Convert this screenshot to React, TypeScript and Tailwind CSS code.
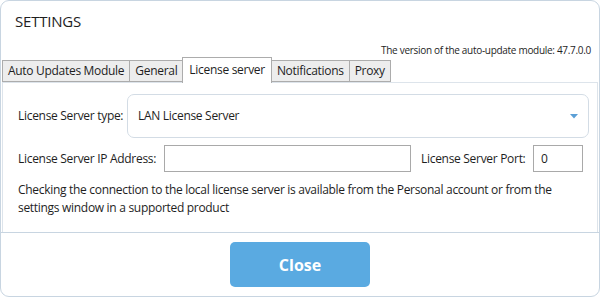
import React from 'react'

const tabs = ['Auto Updates Module', 'General', 'License server', 'Notifications', 'Proxy']

export default function App() {
  const active = 'License server'

  return (
    <div className="w-[600px] h-[297px] bg-white text-[#1e1e1e]" style={{ fontFamily: '"Open Sans", "Noto Sans", sans-serif' }}>
      <div className="h-full border border-[#c8d5e1] rounded-[9px] flex flex-col overflow-hidden">
        {/* header */}
        <div className="pl-[14px] pt-[10px] text-[15px] leading-[20px] tracking-[-0.2px]">SETTINGS</div>
        <div className="text-right pr-[8px] mt-[12px] text-[10px] leading-[14px] tracking-[-0.3px]">
          The version of the auto-update module: 47.7.0.0
        </div>

        {/* tabs */}
        <div className="flex items-end pl-[1px] h-[25px] relative z-10">
          {tabs.map(t =>
            t === active ? (
              <div key={t} className="h-[26px] px-[6px] pt-[3px] bg-white border border-b-0 border-[#acacac] text-[12px] leading-[18px] -mb-[1px] -ml-[1px] tracking-[-0.3px]">
                {t}
              </div>
            ) : (
              <div key={t} className="h-[22px] px-[5px] bg-[#ededed] border border-[#acacac] -ml-[1px] first:ml-0 text-[12px] leading-[20px] tracking-[-0.3px]">
                {t}
              </div>
            )
          )}
        </div>

        {/* panel */}
        <div className="flex-1 mx-[1px] border-l border-r border-t border-[#dde4eb] pl-[15px] pr-[8px] pt-[11px] text-[12px] tracking-[-0.3px]">
          <div className="flex items-center">
            <div className="w-[109px]">License Server type:</div>
            <div className="flex-1 h-[44px] border border-[#d3dce5] rounded-[7px] flex items-center justify-between pl-[10px] pr-[10px]">
              <span>LAN License Server</span>
              <svg width="8" height="5" viewBox="0 0 8 5"><path d="M0 0h8L4 4.5z" fill="#5b9fd6" /></svg>
            </div>
          </div>

          <div className="flex items-center mt-[7px]">
            <div className="w-[146px]">License Server IP Address:</div>
            <div className="w-[247px] h-[27px] border border-[#a9a9a9]" />
            <div className="ml-[10px] w-[112px]">License Server Port:</div>
            <div className="w-[50px] h-[27px] border border-[#a9a9a9] flex items-center pl-[7px]">0</div>
          </div>

          <p className="mt-[9px] leading-[18px] pr-[16px]">
            Checking the connection to the local license server is available from the Personal account or from the settings window in a supported product
          </p>
        </div>

        {/* footer */}
        <div className="h-[64px] border-t border-[#c8d5e1] flex justify-center pt-[9px]">
          <button className="w-[140px] h-[45px] rounded-[5px] bg-[#5aaae1] text-white font-bold text-[16px]">Close</button>
        </div>
      </div>
    </div>
  )
}
